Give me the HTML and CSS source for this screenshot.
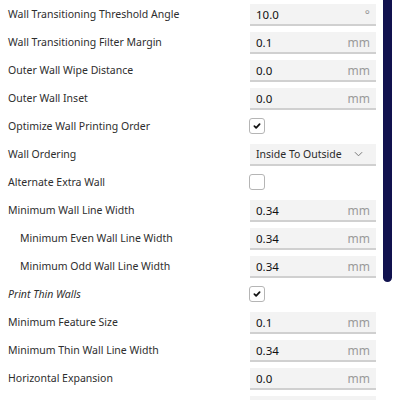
FILE: index.html
```html
<!DOCTYPE html>
<html>
<head>
<meta charset="utf-8">
<link rel="stylesheet" href="styles.css">
</head>
<body>
<div class="panel">
  <div class="list">
    <div class="row"><span class="label">Wall Transitioning Threshold Angle</span><div class="field"><span class="val">10.0</span><span class="unit">°</span></div></div>
    <div class="row"><span class="label">Wall Transitioning Filter Margin</span><div class="field"><span class="val">0.1</span><span class="unit">mm</span></div></div>
    <div class="row"><span class="label">Outer Wall Wipe Distance</span><div class="field"><span class="val">0.0</span><span class="unit">mm</span></div></div>
    <div class="row"><span class="label">Outer Wall Inset</span><div class="field"><span class="val">0.0</span><span class="unit">mm</span></div></div>
    <div class="row"><span class="label">Optimize Wall Printing Order</span><div class="check on"><svg viewBox="0 0 16 16" width="16" height="16"><path d="M5 8.2 L7 10.2 L11 5.8" fill="none" stroke="#111" stroke-width="2" stroke-linecap="round" stroke-linejoin="round"/></svg></div></div>
    <div class="row"><span class="label">Wall Ordering</span><div class="field select"><span class="val">Inside To Outside</span><svg class="chev" viewBox="0 0 10 6" width="9" height="6"><path d="M1 1 L5 5 L9 1" fill="none" stroke="#777" stroke-width="1.1"/></svg></div></div>
    <div class="row"><span class="label">Alternate Extra Wall</span><div class="check"></div></div>
    <div class="row"><span class="label">Minimum Wall Line Width</span><div class="field"><span class="val">0.34</span><span class="unit">mm</span></div></div>
    <div class="row"><span class="label sub">Minimum Even Wall Line Width</span><div class="field"><span class="val">0.34</span><span class="unit">mm</span></div></div>
    <div class="row"><span class="label sub">Minimum Odd Wall Line Width</span><div class="field"><span class="val">0.34</span><span class="unit">mm</span></div></div>
    <div class="row"><span class="label ital">Print Thin Walls</span><div class="check on"><svg viewBox="0 0 16 16" width="16" height="16"><path d="M5 8.2 L7 10.2 L11 5.8" fill="none" stroke="#111" stroke-width="2" stroke-linecap="round" stroke-linejoin="round"/></svg></div></div>
    <div class="row"><span class="label">Minimum Feature Size</span><div class="field"><span class="val">0.1</span><span class="unit">mm</span></div></div>
    <div class="row"><span class="label">Minimum Thin Wall Line Width</span><div class="field"><span class="val">0.34</span><span class="unit">mm</span></div></div>
    <div class="row"><span class="label">Horizontal Expansion</span><div class="field"><span class="val">0.0</span><span class="unit">mm</span></div></div>
    <div class="row"><span class="label"></span><div class="field"></div></div>
  </div>
  <div class="scroll"><div class="thumb"></div></div>
</div>
</body>
</html>
```
FILE: styles.css
```css
html, body {
  margin: 0;
  padding: 0;
  background: #ffffff;
  overflow: hidden;
}
body {
  font-family: "Noto Sans", "Open Sans", sans-serif;
  font-size: 10.5px;
  color: #2e2e2e;
}
.panel {
  display: flex;
  height: 400px;
  overflow: hidden;
}
.list {
  width: 376px;
  flex: none;
}
.row {
  height: 28px;
  display: flex;
  align-items: center;
  justify-content: space-between;
  padding-left: 8px;
  box-sizing: border-box;
}
.label.sub { padding-left: 12px; }
.label.ital { font-style: italic; }
.field {
  width: 126px;
  height: 22px;
  box-sizing: border-box;
  background: #f3f3f3;
  border-bottom: 2px solid #d0d0d0;
  display: flex;
  align-items: center;
  justify-content: space-between;
  padding: 0 6px 0 6px;
  margin-top: 2px;
}
.val { color: #111; font-size: 11.5px; }
.unit { color: #9a9a9a; font-size: 12px; }
.select .val { color: #2a2a2a; font-size: 10.5px; }
.chev { margin-right: 7px; }
.check {
  width: 16px;
  height: 16px;
  box-sizing: border-box;
  border: 1px solid #b5b5b5;
  border-radius: 3px;
  margin-right: 111px;
  background: #fff;
  display: flex;
  align-items: center;
  justify-content: center;
}
.check svg { display: block; }
.scroll {
  width: 24px;
  flex: none;
  display: flex;
  padding-left: 7px;
  box-sizing: border-box;
  justify-content: flex-start;
}
.thumb {
  width: 9px;
  height: 282px;
  background: #11124f;
  border-radius: 0 0 5px 5px;
}
```
